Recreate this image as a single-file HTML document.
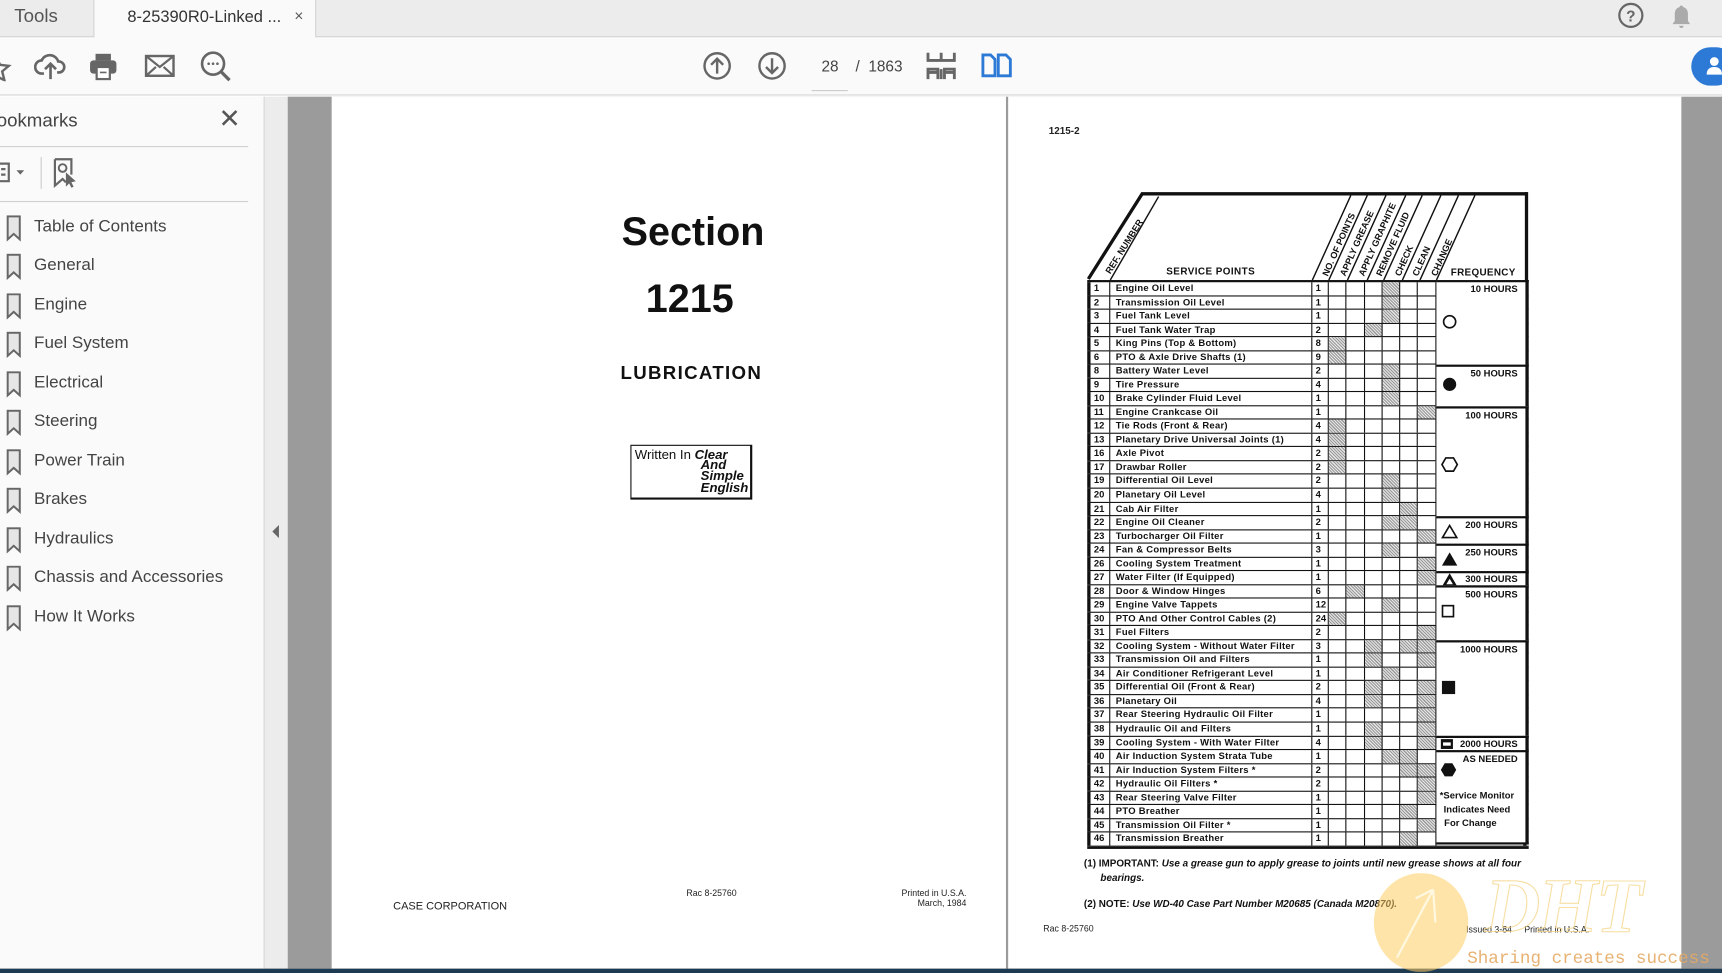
<!DOCTYPE html>
<html><head><meta charset="utf-8"><style>
*{margin:0;padding:0;box-sizing:border-box}
html,body{width:1722px;height:973px;overflow:hidden;background:#fff}
#w{position:absolute;left:0;top:0;width:1568px;height:886px;transform:scale(1.09821);transform-origin:0 0;font-family:"Liberation Sans",sans-serif;overflow:hidden}
.a{position:absolute}
#tabs{left:0;top:0;width:1568px;height:34px;background:#ececec;border-bottom:1px solid #d0d0d0}
#tb{left:0;top:34px;width:1568px;height:53px;background:#fafafa;border-bottom:1px solid #d4d4d4}
#side{left:0;top:88px;width:240px;height:794px;background:#fafafa}
.bm{position:absolute;left:0;font-size:15.5px;color:#444;height:20px}
.bm svg{position:absolute;left:5px;top:0}
.bm span{position:absolute;left:31px;top:2px;white-space:nowrap}
.pg{background:#fff}
.t{position:absolute;white-space:nowrap}
#tbl{left:990px;top:255px;width:402px}
.r{display:flex;height:12.54px;border-bottom:1px solid #111;font-weight:bold;font-size:8.6px;line-height:11.5px;color:#111}
.r b{width:21px;border-left:3px solid #111;border-right:1.4px solid #111;padding-left:3px;font-weight:bold}
.r i{font-style:normal;width:184px;border-right:1.4px solid #111;padding-left:5px;letter-spacing:.25px;white-space:nowrap;overflow:hidden}
.r u{text-decoration:none;width:15px;border-right:1.2px solid #111;padding-left:3px}
.r s{text-decoration:none;width:16.3px;border-right:1px solid #111}
.r s.h{background:repeating-linear-gradient(45deg,#999 0 1px,#e6e6e6 1px 2px)}
.r em{width:82px;border-right:3px solid #111}
.fq{position:absolute;left:1308px;width:84px;border-top:2px solid #111;background:#fff;font-weight:bold;font-size:8.6px;color:#111;border-right:3px solid #111}
.fq span{position:absolute;right:7px;top:1px}
</style></head><body><div id="w">
<div class="a" id="tabs"></div>
<div class="t" style="left:13px;top:5px;font-size:17px;color:#555">Tools</div>
<div class="a" style="left:85px;top:0;width:203px;height:35px;background:#fafafa;border-left:1px solid #d0d0d0;border-right:1px solid #d0d0d0"></div>
<div class="t" style="left:116px;top:7px;font-size:15px;color:#333">8-25390R0-Linked ...</div>
<div class="t" style="left:268px;top:6px;font-size:14px;color:#555">×</div>
<svg class="a" style="left:1472px;top:2px" width="26" height="26"><circle cx="13" cy="12" r="10.5" fill="none" stroke="#666" stroke-width="2"/><text x="13" y="17.5" font-size="14" font-weight="bold" fill="#666" text-anchor="middle" font-family="Liberation Sans">?</text></svg>
<svg class="a" style="left:1519px;top:3px" width="24" height="24"><path d="M12 2c-1 0-1.5.6-1.5 1.4C7 4.3 6 7 6 10v6l-2 3h16l-2-3v-6c0-3-1-5.7-4.5-6.6C13.5 2.6 13 2 12 2zM10 20.5a2 2 0 0 0 4 0z" fill="#aaa"/></svg>
<div class="a" id="tb"></div>
<svg class="a" style="left:0;top:46px" width="12" height="28"><path d="M-4 4l4 9 8 1-6 5 2 8-8-4" fill="none" stroke="#666" stroke-width="2.2"/></svg>
<svg class="a" style="left:31px;top:46px" width="30" height="28"><path d="M9 21H7a6 6 0 0 1 0-12 8 8 0 0 1 15 1 5 5 0 0 1 1 10h-2M15 26V12M10 17l5-5 5 5" fill="none" stroke="#666" stroke-width="2.4"/></svg>
<svg class="a" style="left:80px;top:46px" width="30" height="28"><rect x="7" y="3" width="14" height="6" fill="#666"/><rect x="2" y="9" width="24" height="12" rx="3" fill="#666"/><rect x="8" y="15" width="12" height="11" fill="#fff" stroke="#666" stroke-width="2"/><path d="M11 20h6" stroke="#666" stroke-width="1.5"/></svg>
<svg class="a" style="left:131px;top:48px" width="30" height="24"><rect x="2" y="3" width="25" height="18" fill="none" stroke="#666" stroke-width="2.2"/><path d="M2 3l12.5 10L27 3M2 21l9-8M27 21l-9-8" fill="none" stroke="#666" stroke-width="2"/></svg>
<svg class="a" style="left:181px;top:46px" width="32" height="32"><circle cx="13" cy="12" r="10" fill="none" stroke="#666" stroke-width="2.4"/><path d="M20 19l8 8" stroke="#666" stroke-width="3"/><circle cx="9" cy="12" r="1.2" fill="#666"/><circle cx="13" cy="12" r="1.2" fill="#666"/><circle cx="17" cy="12" r="1.2" fill="#666"/></svg>
<svg class="a" style="left:639px;top:46px" width="28" height="28"><circle cx="14" cy="14" r="11.5" fill="none" stroke="#666" stroke-width="2.2"/><path d="M14 21V8M8.5 13l5.5-5.5 5.5 5.5" fill="none" stroke="#666" stroke-width="2.2"/></svg>
<svg class="a" style="left:689px;top:46px" width="28" height="28"><circle cx="14" cy="14" r="11.5" fill="none" stroke="#666" stroke-width="2.2"/><path d="M14 7v13M8.5 15l5.5 5.5 5.5-5.5" fill="none" stroke="#666" stroke-width="2.2"/></svg>
<div class="t" style="left:748px;top:52px;font-size:14px;color:#444">28</div>
<div class="a" style="left:739px;top:82px;width:33px;height:1px;background:#ccc"></div>
<div class="t" style="left:779px;top:52px;font-size:14px;color:#444">/&nbsp;&nbsp;1863</div>
<svg class="a" style="left:842px;top:46px" width="30" height="28"><path d="M3 2v7h24V2M15 2v7M3 26v-9h9v9M18 26v-9h9v9M3 20h9M18 20h9M15 17v9" fill="none" stroke="#666" stroke-width="2.6"/></svg>
<svg class="a" style="left:893px;top:48px" width="30" height="24"><path d="M2 2h7l4 4v15H2zM16 2h7l4 4v15H16z" fill="none" stroke="#2d7ad6" stroke-width="2.6"/></svg>
<div class="a" style="left:1540px;top:43px;width:40px;height:35px;border-radius:18px;background:#2d7ad6"></div>
<svg class="a" style="left:1553px;top:51px" width="15" height="18"><circle cx="8" cy="5" r="4" fill="#fff"/><path d="M1 17c0-5 3-7 7-7s7 2 7 7z" fill="#fff"/></svg>
<div class="a" id="side"></div>
<div class="t" style="left:-3px;top:100px;font-size:17px;color:#444">ookmarks</div>
<div class="t" style="left:199px;top:94px;font-size:24px;color:#555">✕</div>
<div class="a" style="left:0;top:133px;width:226px;height:1px;background:#d0d0d0"></div>
<svg class="a" style="left:0;top:146px" width="26" height="22"><path d="M-2 3h10v16H-2M1 8h4M1 13h4" fill="none" stroke="#666" stroke-width="2"/><path d="M15 9h7l-3.5 4z" fill="#666"/></svg>
<div class="a" style="left:37px;top:143px;width:1px;height:29px;background:#ccc"></div>
<svg class="a" style="left:44px;top:143px" width="28" height="30"><path d="M6 2h15v14M6 2v24l7-6 3 3" fill="none" stroke="#666" stroke-width="2"/><circle cx="13" cy="10" r="3.5" fill="none" stroke="#666" stroke-width="1.8"/><path d="M16 14l9 8-4 1 2 4-2 1-2-4-3 3z" fill="#666"/></svg>
<div class="a" style="left:0;top:183px;width:226px;height:1px;background:#d0d0d0"></div>
<div class="bm" style="top:196px"><svg width="15" height="24"><path d="M2 1h11v21l-5.5-5L2 22z" fill="#e6e6e6" stroke="#666" stroke-width="1.8"/></svg><span>Table of Contents</span></div>
<div class="bm" style="top:231px"><svg width="15" height="24"><path d="M2 1h11v21l-5.5-5L2 22z" fill="#e6e6e6" stroke="#666" stroke-width="1.8"/></svg><span>General</span></div>
<div class="bm" style="top:267px"><svg width="15" height="24"><path d="M2 1h11v21l-5.5-5L2 22z" fill="#e6e6e6" stroke="#666" stroke-width="1.8"/></svg><span>Engine</span></div>
<div class="bm" style="top:302px"><svg width="15" height="24"><path d="M2 1h11v21l-5.5-5L2 22z" fill="#e6e6e6" stroke="#666" stroke-width="1.8"/></svg><span>Fuel System</span></div>
<div class="bm" style="top:338px"><svg width="15" height="24"><path d="M2 1h11v21l-5.5-5L2 22z" fill="#e6e6e6" stroke="#666" stroke-width="1.8"/></svg><span>Electrical</span></div>
<div class="bm" style="top:373px"><svg width="15" height="24"><path d="M2 1h11v21l-5.5-5L2 22z" fill="#e6e6e6" stroke="#666" stroke-width="1.8"/></svg><span>Steering</span></div>
<div class="bm" style="top:409px"><svg width="15" height="24"><path d="M2 1h11v21l-5.5-5L2 22z" fill="#e6e6e6" stroke="#666" stroke-width="1.8"/></svg><span>Power Train</span></div>
<div class="bm" style="top:444px"><svg width="15" height="24"><path d="M2 1h11v21l-5.5-5L2 22z" fill="#e6e6e6" stroke="#666" stroke-width="1.8"/></svg><span>Brakes</span></div>
<div class="bm" style="top:480px"><svg width="15" height="24"><path d="M2 1h11v21l-5.5-5L2 22z" fill="#e6e6e6" stroke="#666" stroke-width="1.8"/></svg><span>Hydraulics</span></div>
<div class="bm" style="top:515px"><svg width="15" height="24"><path d="M2 1h11v21l-5.5-5L2 22z" fill="#e6e6e6" stroke="#666" stroke-width="1.8"/></svg><span>Chassis and Accessories</span></div>
<div class="bm" style="top:551px"><svg width="15" height="24"><path d="M2 1h11v21l-5.5-5L2 22z" fill="#e6e6e6" stroke="#666" stroke-width="1.8"/></svg><span>How It Works</span></div>
<div class="a" style="left:240px;top:88px;width:22px;height:794px;background:#ececec;border-left:1px solid #d8d8d8"></div>
<svg class="a" style="left:246px;top:477px" width="10" height="14"><path d="M8 1L2 7l6 6z" fill="#666"/></svg>
<div class="a" style="left:262px;top:88px;width:1306px;height:794px;background:#9b9b9b"></div>
<div class="a pg" style="left:302px;top:88px;width:614px;height:794px"></div>
<div class="a pg" style="left:918px;top:88px;width:613px;height:794px"></div>
<div class="a" style="left:0;top:882px;width:1568px;height:4px;background:#1f3b52"></div>
<div class="t" style="left:566px;top:190px;font-size:36px;font-weight:bold;color:#111">Section</div>
<div class="t" style="left:588px;top:251px;font-size:36px;font-weight:bold;color:#111">1215</div>
<div class="t" style="left:565px;top:330px;font-size:17px;font-weight:bold;color:#111;letter-spacing:1.2px">LUBRICATION</div>
<div class="a" style="left:574px;top:405px;width:111px;height:50px;border:1.5px solid #111;border-right-width:2.5px;border-bottom-width:2.5px"></div>
<div class="t" style="left:578px;top:407px;font-size:12px;color:#111">Written In <b><i>Clear</i></b></div>
<div class="t" style="left:638px;top:418px;font-size:12px;line-height:10.3px;color:#111;font-weight:bold;font-style:italic">And<br>Simple<br>English</div>
<div class="t" style="left:358px;top:820px;font-size:10px;color:#222">CASE CORPORATION</div>
<div class="t" style="left:625px;top:809px;font-size:8px;color:#222">Rac 8-25760</div>
<div class="t" style="left:800px;top:810px;width:80px;text-align:right;font-size:8px;line-height:8.5px;color:#222">Printed in U.S.A.<br>March, 1984</div>
<div class="t" style="left:955px;top:114px;font-size:9px;font-weight:bold;color:#222">1215-2</div>
<svg class="a" style="left:985px;top:170px" width="412" height="90">
<g stroke="#111" fill="none">
<path d="M6 84L55 6.5H406" stroke-width="3"/>
<path d="M405 5v85" stroke-width="3"/>
<path d="M26 85L70 9" stroke-width="1.3"/>
<path d="M210 85l35-77M225 85l35-77M242 85l35-77M260 85l35-77M275 85l35-77M292 85l35-77M308 85l35-77M323 85l35-77" stroke-width="1.3"/>
</g>
<g font-family="Liberation Sans" font-weight="bold" font-size="8.3" fill="#111">
<text transform="translate(26,80) rotate(-58)">REF. NUMBER</text>
<text x="77" y="80" font-size="9" letter-spacing=".4">SERVICE POINTS</text>
<text x="336" y="81" font-size="9" letter-spacing=".3">FREQUENCY</text>
<text transform="translate(224,82) rotate(-66)">NO. OF POINTS</text>
<text transform="translate(240,82) rotate(-66)">APPLY GREASE</text>
<text transform="translate(257,82) rotate(-66)">APPLY GRAPHITE</text>
<text transform="translate(273,82) rotate(-66)">REMOVE FLUID</text>
<text transform="translate(290,82) rotate(-66)">CHECK</text>
<text transform="translate(306,82) rotate(-66)">CLEAN</text>
<text transform="translate(323,82) rotate(-66)">CHANGE</text>
</g></svg>
<div class="a" id="tbl" style="border-top:2px solid #111;border-bottom:2px solid #111">
<div class="r"><b>1</b><i>Engine Oil Level</i><u>1</u><s></s><s></s><s></s><s class="h"></s><s></s><s></s><em></em></div>
<div class="r"><b>2</b><i>Transmission Oil Level</i><u>1</u><s></s><s></s><s></s><s class="h"></s><s></s><s></s><em></em></div>
<div class="r"><b>3</b><i>Fuel Tank Level</i><u>1</u><s></s><s></s><s></s><s class="h"></s><s></s><s></s><em></em></div>
<div class="r"><b>4</b><i>Fuel Tank Water Trap</i><u>2</u><s></s><s></s><s class="h"></s><s></s><s></s><s></s><em></em></div>
<div class="r"><b>5</b><i>King Pins (Top &amp; Bottom)</i><u>8</u><s class="h"></s><s></s><s></s><s></s><s></s><s></s><em></em></div>
<div class="r"><b>6</b><i>PTO &amp; Axle Drive Shafts (1)</i><u>9</u><s class="h"></s><s></s><s></s><s></s><s></s><s></s><em></em></div>
<div class="r"><b>8</b><i>Battery Water Level</i><u>2</u><s></s><s></s><s></s><s class="h"></s><s></s><s></s><em></em></div>
<div class="r"><b>9</b><i>Tire Pressure</i><u>4</u><s></s><s></s><s></s><s class="h"></s><s></s><s></s><em></em></div>
<div class="r"><b>10</b><i>Brake Cylinder Fluid Level</i><u>1</u><s></s><s></s><s></s><s class="h"></s><s></s><s></s><em></em></div>
<div class="r"><b>11</b><i>Engine Crankcase Oil</i><u>1</u><s></s><s></s><s></s><s></s><s></s><s class="h"></s><em></em></div>
<div class="r"><b>12</b><i>Tie Rods (Front &amp; Rear)</i><u>4</u><s class="h"></s><s></s><s></s><s></s><s></s><s></s><em></em></div>
<div class="r"><b>13</b><i>Planetary Drive Universal Joints (1)</i><u>4</u><s class="h"></s><s></s><s></s><s></s><s></s><s></s><em></em></div>
<div class="r"><b>16</b><i>Axle Pivot</i><u>2</u><s class="h"></s><s></s><s></s><s></s><s></s><s></s><em></em></div>
<div class="r"><b>17</b><i>Drawbar Roller</i><u>2</u><s class="h"></s><s></s><s></s><s></s><s></s><s></s><em></em></div>
<div class="r"><b>19</b><i>Differential Oil Level</i><u>2</u><s></s><s></s><s></s><s class="h"></s><s></s><s></s><em></em></div>
<div class="r"><b>20</b><i>Planetary Oil Level</i><u>4</u><s></s><s></s><s></s><s class="h"></s><s></s><s></s><em></em></div>
<div class="r"><b>21</b><i>Cab Air Filter</i><u>1</u><s></s><s></s><s></s><s></s><s class="h"></s><s></s><em></em></div>
<div class="r"><b>22</b><i>Engine Oil Cleaner</i><u>2</u><s></s><s></s><s></s><s class="h"></s><s class="h"></s><s></s><em></em></div>
<div class="r"><b>23</b><i>Turbocharger Oil Filter</i><u>1</u><s></s><s></s><s></s><s></s><s></s><s class="h"></s><em></em></div>
<div class="r"><b>24</b><i>Fan &amp; Compressor Belts</i><u>3</u><s></s><s></s><s></s><s class="h"></s><s></s><s></s><em></em></div>
<div class="r"><b>26</b><i>Cooling System Treatment</i><u>1</u><s></s><s></s><s></s><s></s><s></s><s class="h"></s><em></em></div>
<div class="r"><b>27</b><i>Water Filter (If Equipped)</i><u>1</u><s></s><s></s><s></s><s></s><s></s><s class="h"></s><em></em></div>
<div class="r"><b>28</b><i>Door &amp; Window Hinges</i><u>6</u><s></s><s class="h"></s><s></s><s></s><s></s><s></s><em></em></div>
<div class="r"><b>29</b><i>Engine Valve Tappets</i><u>12</u><s></s><s></s><s></s><s class="h"></s><s></s><s></s><em></em></div>
<div class="r"><b>30</b><i>PTO And Other Control Cables (2)</i><u>24</u><s class="h"></s><s></s><s></s><s></s><s></s><s></s><em></em></div>
<div class="r"><b>31</b><i>Fuel Filters</i><u>2</u><s></s><s></s><s></s><s></s><s></s><s class="h"></s><em></em></div>
<div class="r"><b>32</b><i>Cooling System - Without Water Filter</i><u>3</u><s></s><s></s><s class="h"></s><s></s><s class="h"></s><s class="h"></s><em></em></div>
<div class="r"><b>33</b><i>Transmission Oil and Filters</i><u>1</u><s></s><s></s><s class="h"></s><s></s><s></s><s class="h"></s><em></em></div>
<div class="r"><b>34</b><i>Air Conditioner Refrigerant Level</i><u>1</u><s></s><s></s><s></s><s class="h"></s><s></s><s></s><em></em></div>
<div class="r"><b>35</b><i>Differential Oil (Front &amp; Rear)</i><u>2</u><s></s><s></s><s class="h"></s><s></s><s></s><s class="h"></s><em></em></div>
<div class="r"><b>36</b><i>Planetary Oil</i><u>4</u><s></s><s></s><s class="h"></s><s></s><s></s><s class="h"></s><em></em></div>
<div class="r"><b>37</b><i>Rear Steering Hydraulic Oil Filter</i><u>1</u><s></s><s></s><s></s><s></s><s></s><s class="h"></s><em></em></div>
<div class="r"><b>38</b><i>Hydraulic Oil and Filters</i><u>1</u><s></s><s></s><s class="h"></s><s></s><s></s><s class="h"></s><em></em></div>
<div class="r"><b>39</b><i>Cooling System - With Water Filter</i><u>4</u><s></s><s></s><s class="h"></s><s></s><s></s><s class="h"></s><em></em></div>
<div class="r"><b>40</b><i>Air Induction System Strata Tube</i><u>1</u><s></s><s></s><s></s><s class="h"></s><s class="h"></s><s></s><em></em></div>
<div class="r"><b>41</b><i>Air Induction System Filters *</i><u>2</u><s></s><s></s><s></s><s></s><s class="h"></s><s class="h"></s><em></em></div>
<div class="r"><b>42</b><i>Hydraulic Oil Filters *</i><u>2</u><s></s><s></s><s></s><s></s><s></s><s class="h"></s><em></em></div>
<div class="r"><b>43</b><i>Rear Steering Valve Filter</i><u>1</u><s></s><s></s><s></s><s></s><s></s><s class="h"></s><em></em></div>
<div class="r"><b>44</b><i>PTO Breather</i><u>1</u><s></s><s></s><s></s><s></s><s class="h"></s><s></s><em></em></div>
<div class="r"><b>45</b><i>Transmission Oil Filter *</i><u>1</u><s></s><s></s><s></s><s></s><s></s><s class="h"></s><em></em></div>
<div class="r"><b>46</b><i>Transmission Breather</i><u>1</u><s></s><s></s><s></s><s></s><s class="h"></s><s></s><em></em></div>
</div>
<div class="fq" style="top:255px;height:77px"><span>10 HOURS</span><svg class="a" style="left:5px;top:29px" width="14" height="14"><circle cx="7" cy="7" r="5.5" fill="none" stroke="#111" stroke-width="1.5"/></svg></div>
<div class="fq" style="top:332px;height:38px"><span>50 HOURS</span><svg class="a" style="left:5px;top:9px" width="14" height="14"><circle cx="7" cy="7" r="6" fill="#111"/></svg></div>
<div class="fq" style="top:370px;height:100px"><span>100 HOURS</span><svg class="a" style="left:4px;top:43px" width="16" height="16"><path d="M4.5 2h7l3.5 6-3.5 6h-7L1 8z" fill="none" stroke="#111" stroke-width="1.5"/></svg></div>
<div class="fq" style="top:470px;height:25px"><span>200 HOURS</span><svg class="a" style="left:4px;top:5px" width="16" height="14"><path d="M8 1.5L14.5 12.5h-13z" fill="none" stroke="#111" stroke-width="1.5"/></svg></div>
<div class="fq" style="top:495px;height:25px"><span>250 HOURS</span><svg class="a" style="left:4px;top:5px" width="16" height="14"><path d="M8 1L15 13H1z" fill="#111"/></svg></div>
<div class="fq" style="top:520px;height:13px"><span style="top:0">300 HOURS</span><svg class="a" style="left:4px;top:0" width="16" height="12"><path d="M8 0L15 12H1z" fill="#111"/><path d="M8 5L11 10H5z" fill="#fff"/></svg></div>
<div class="fq" style="top:533px;height:50px"><span>500 HOURS</span><svg class="a" style="left:4px;top:15px" width="14" height="14"><rect x="1.5" y="1.5" width="10" height="10" fill="none" stroke="#111" stroke-width="1.5"/></svg></div>
<div class="fq" style="top:583px;height:87px"><span>1000 HOURS</span><svg class="a" style="left:4px;top:34px" width="14" height="14"><rect x="1" y="1" width="12" height="12" fill="#111"/></svg></div>
<div class="fq" style="top:670px;height:13px"><span style="top:0">2000 HOURS</span><svg class="a" style="left:3px;top:0" width="14" height="12"><rect x="1" y="1" width="11" height="9" fill="#111"/><rect x="3" y="4" width="7" height="3" fill="#fff"/></svg></div>
<div class="fq" style="top:683px;height:86px;border-bottom:2px solid #111"><span>AS NEEDED</span><svg class="a" style="left:3px;top:8px" width="16" height="16"><path d="M4.5 2h7l3.5 6-3.5 6h-7L1 8z" fill="#111"/></svg><div class="t" style="left:3px;top:33px;font-size:8.6px;line-height:12.6px;text-align:center">*Service Monitor<br>Indicates Need<br><span style="position:static;margin-left:-12px">For Change</span></div></div>
<div class="t" style="left:987px;top:781px;font-size:9px;font-weight:bold;color:#111">(1) IMPORTANT: <i>Use a grease gun to apply grease to joints until new grease shows at all four</i></div>
<div class="t" style="left:1002px;top:794px;font-size:9px;font-weight:bold;font-style:italic;color:#111">bearings.</div>
<div class="t" style="left:987px;top:818px;font-size:9px;font-weight:bold;color:#111">(2) NOTE: <i>Use WD-40 Case Part Number M20685 (Canada M20870).</i></div>
<div class="t" style="left:950px;top:841px;font-size:8px;color:#222">Rac 8-25760</div>
<div class="t" style="left:1335px;top:842px;font-size:8px;color:#222">Issued 3-84&nbsp;&nbsp;&nbsp;&nbsp;&nbsp;Printed in U.S.A.</div>
<div class="a" style="left:1251px;top:795px;width:86px;height:90px;border-radius:50%;background:rgba(255,205,100,.55)"></div>
<svg class="a" style="left:1260px;top:800px" width="70" height="80"><path d="M12 72L45 10M45 10l-16 8M45 10l2 30" fill="none" stroke="#fff8e0" stroke-width="2"/></svg>
<div class="t" style="left:1352px;top:786px;font-size:70px;font-weight:bold;font-style:italic;color:transparent;-webkit-text-stroke:1px rgba(245,215,140,.8);font-family:'Liberation Serif',serif;letter-spacing:-2px">DHT</div>
<div class="t" style="left:1336px;top:864px;font-size:16px;font-family:'Liberation Mono',monospace;color:rgba(230,170,100,.9)">Sharing creates success</div>
</div></body></html>
